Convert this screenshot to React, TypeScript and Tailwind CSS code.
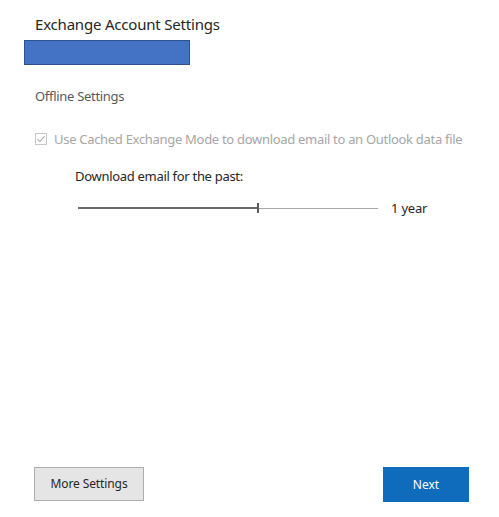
import React from "react";

export default function App() {
  return (
    <div
      className="w-[499px] h-[517px] bg-white flex flex-col relative overflow-hidden"
      style={{ fontFamily: '"Noto Sans", "Open Sans", sans-serif' }}
    >
      <div className="pl-[35px] pt-[14px] text-[15px] leading-[20px] tracking-[-0.2px] text-[#262626]">
        Exchange Account Settings
      </div>
      <div className="ml-[24px] mt-[6px] w-[166px] h-[25px] bg-[#4472c4] border border-[#2f528f]" />
      <div className="pl-[35px] mt-[22px] text-[13px] leading-[18px] tracking-[-0.3px] text-[#595959]">
        Offline Settings
      </div>
      <div className="pl-[35px] mt-[25px] flex items-center gap-[7px] text-[13px] leading-[18px] tracking-[-0.3px] text-[#a6a6a6]">
        <div className="w-[12px] h-[12px] border border-[#c8c8c8] flex items-center justify-center">
          <svg width="10" height="10" viewBox="0 0 10 10">
            <path d="M1.5 5.2 L4 7.6 L8.6 2.2" fill="none" stroke="#b0b0b0" strokeWidth="1.1" />
          </svg>
        </div>
        <span>Use Cached Exchange Mode to download email to an Outlook data file</span>
      </div>
      <div className="pl-[75px] mt-[19px] text-[13px] leading-[18px] tracking-[-0.3px] text-[#262626]">
        Download email for the past:
      </div>
      <div className="pl-[78px] mt-[14px] flex items-center h-[18px]">
        <div className="relative w-[300px] h-[10px] flex items-center">
          <div className="w-[179px] h-[2px] bg-[#6b6b6b]" />
          <div className="w-[2px] h-[10px] bg-[#5a5a5a]" />
          <div className="flex-1 h-[1px] bg-[#a8a8a8]" />
        </div>
        <div className="ml-[13px] text-[13px] leading-[18px] tracking-[-0.2px] text-[#262626]">1 year</div>
      </div>
      <div className="mt-auto mb-[15px] pl-[34px] pr-[30px] flex justify-between">
        <button className="w-[110px] h-[34px] bg-[#e5e5e5] border border-[#adadad] text-[12px] tracking-[-0.1px] text-[#262626]">
          More Settings
        </button>
        <button className="w-[86px] h-[35px] bg-[#0f6cbd] text-[12px] text-white">
          Next
        </button>
      </div>
    </div>
  );
}
